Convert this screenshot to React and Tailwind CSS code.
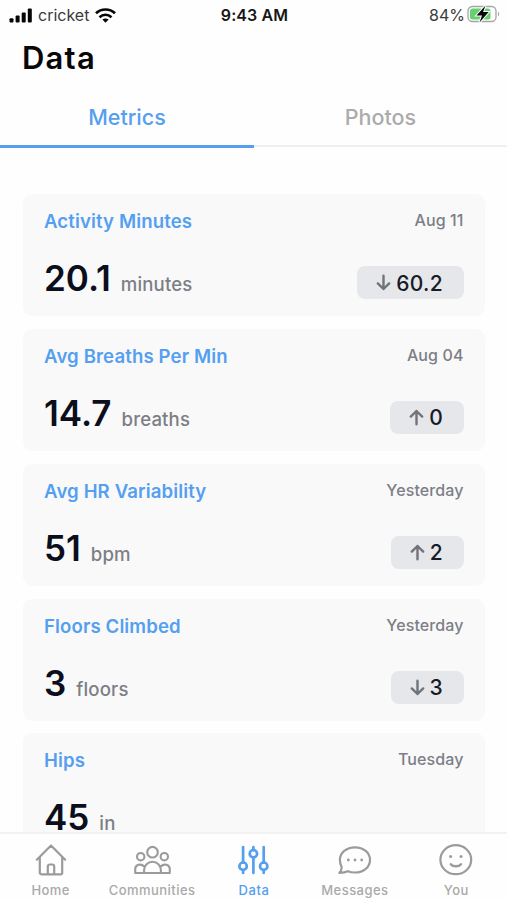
import React from "react";

const metrics = [
  { name: "Activity Minutes", date: "Aug 11", value: "20.1", unit: "minutes", dir: "down", delta: "60.2" },
  { name: "Avg Breaths Per Min", date: "Aug 04", value: "14.7", unit: "breaths", dir: "up", delta: "0" },
  { name: "Avg HR Variability", date: "Yesterday", value: "51", unit: "bpm", dir: "up", delta: "2" },
  { name: "Floors Climbed", date: "Yesterday", value: "3", unit: "floors", dir: "down", delta: "3" },
  { name: "Hips", date: "Tuesday", value: "45", unit: "in" },
];

function Arrow({ dir }) {
  return (
    <svg
      className={dir === "up" ? "h-[17px] w-[15px] text-[#707378]" : "h-[17px] w-[15px] rotate-180 text-[#707378]"}
      viewBox="0 0 15 17"
      fill="none"
      stroke="currentColor"
      strokeWidth="2.4"
      strokeLinecap="round"
      strokeLinejoin="round"
    >
      <path d="M7.500 15.300V2M1.800 7.600 7.500 2l5.700 5.600" />
    </svg>
  );
}

function MetricCard({ metric }) {
  return (
    <section className="flex h-[122px] shrink-0 flex-col justify-between rounded-[9px] bg-[#f9f9fa] pt-[14px] pr-[21px] pb-[17px] pl-[21.500px]">
      <div className="flex items-start justify-between">
        <h2 className="text-[18.600px] leading-[27px] font-semibold tracking-[0.120px] text-[#559ff0]">{metric.name}</h2>
        <span className="text-[16px] leading-[24px] font-medium tracking-[0.100px] text-[#7c7f85]">{metric.date}</span>
      </div>
      <div className="flex items-end justify-between">
        <div className="flex h-[42px] items-baseline gap-[10px]">
          <span className="text-[35px] leading-[42px] font-semibold text-[#0b0f1c]">{metric.value}</span>
          <span className="text-[18.600px] leading-[27px] font-medium tracking-[0.150px] text-[#7c7f85]">{metric.unit}</span>
        </div>
        {metric.delta && (
          <div className="flex h-[33px] items-center gap-[5px] rounded-[8px] bg-[#e5e7ea] pr-[20.500px] pl-[19px] text-[21px] leading-[33px] font-medium tracking-[0.300px] text-[#171b26]">
            <Arrow dir={metric.dir} />
            <span className="pt-px">{metric.delta}</span>
          </div>
        )}
      </div>
    </section>
  );
}

function StatusBar() {
  return (
    <header className="grid h-[30px] shrink-0 grid-cols-3 items-center pr-[7px] pl-[9px] text-[16px] leading-5 text-[#3b3b3b]">
      <div className="flex items-center">
        <svg className="mr-[6px] h-[15px] w-[23px]" viewBox="0 0 23 15" fill="#060606">
          <rect x="0.5" y="10.2" width="4" height="4.3" rx="1" />
          <rect x="6.6" y="7.5" width="4" height="7" rx="1" />
          <rect x="12.7" y="4.4" width="4" height="10.1" rx="1" />
          <rect x="18.8" y="0.5" width="4" height="14" rx="1" />
        </svg>
        <span>cricket</span>
        <svg className="ml-[6px] h-[15px] w-[21px]" viewBox="0 0 21 15" fill="none" stroke="#060606">
          <path d="M1 5.300C6.400.2 14.600.2 20 5.300" strokeWidth="2.700" />
          <path d="M4.500 9.200C8 5.900 13 5.900 16.500 9.200" strokeWidth="2.600" />
          <path d="M7.400 11.600C9.300 10 11.700 10 13.600 11.600L10.500 14.700Z" fill="#060606" stroke="none" />
        </svg>
      </div>
      <span className="text-center font-semibold tracking-[0.100px] text-[#171717]">9:43 AM</span>
      <div className="flex items-center justify-end gap-[2px]">
        <span>84%</span>
        <svg className="h-[20px] w-[33px]" viewBox="0 0 33 20">
          <rect x="1" y="1.500" width="28" height="15" rx="4.500" fill="#fff" stroke="#a5a5a5" strokeWidth="1.300" />
          <rect x="3" y="3.500" width="20.500" height="11" rx="2.500" fill="#65d06d" />
          <path d="M31 6.700c1.500.600 1.500 4 0 4.600Z" fill="#a5a5a5" />
          <path d="m18.500.500-9 10h5.500L12.500 17.500l9.200-10.500h-5.600Z" fill="#080808" stroke="#fff" strokeWidth="2" paintOrder="stroke" />
        </svg>
      </div>
    </header>
  );
}

function HomeIcon() {
  return (
    <svg className="h-9 w-9" viewBox="0 0 36 36" fill="none" stroke="currentColor" strokeWidth="2.200" strokeLinecap="round" strokeLinejoin="round">
      <path d="M3.800 18.700 18 4.500 32.200 18.700M6.800 16V31.700a1.600 1.600 0 0 0 1.600 1.600h19.200a1.600 1.600 0 0 0 1.600-1.600V16M14.800 33.200v-7.700a2 2 0 0 1 2-2h2.400a2 2 0 0 1 2 2v7.700" />
    </svg>
  );
}

function CommunitiesIcon() {
  return (
    <svg className="h-9 w-[38px]" viewBox="0 0 38 36" fill="none" stroke="currentColor" strokeWidth="2.100" strokeLinecap="round" strokeLinejoin="round">
      <circle cx="19.500" cy="11.200" r="5.300" />
      <circle cx="7.700" cy="15.700" r="3.700" />
      <circle cx="31.300" cy="15.700" r="3.700" />
      <path d="M11.100 32v-3.200a8.400 8 0 0 1 16.800 0v3.200ZM11.100 32H2.200v-3.900c0-4.500 5.700-6 9-2.700M27.900 32h8.900v-3.900c0-4.500-5.700-6-9-2.700" />
    </svg>
  );
}

function DataIcon() {
  return (
    <svg className="h-9 w-9" viewBox="0 0 36 36" fill="none" stroke="currentColor" strokeWidth="2.700" strokeLinecap="round">
      <path d="M8.100 6v15.700M8.100 29.500v2.500M18.400 6v3.200M18.400 17v15M28.700 6v15.700M28.700 29.500v2.500" />
      <circle cx="8.100" cy="25.200" r="3.700" />
      <circle cx="18.400" cy="12.700" r="3.700" />
      <circle cx="28.700" cy="25.200" r="3.700" />
    </svg>
  );
}

function MessagesIcon() {
  return (
    <svg className="h-9 w-9" viewBox="0 0 36 36" fill="none" stroke="currentColor" strokeWidth="2.200" strokeLinejoin="round">
      <path d="M18 6.300C26.600 6.300 33 11.800 33 18.900s-6.400 12.600-15 12.600c-2.700 0-5.200-.400-7.200-1.300-2.300 1.200-4.900 1.600-8.400 1.700 1.500-1.700 2.300-3.600 2.300-5.600-1-2.200-1.800-4.500-1.800-7.400C2.900 11.800 9.400 6.300 18 6.300Z" />
      <g fill="currentColor" stroke="none">
        <circle cx="11.300" cy="19" r="1.400" />
        <circle cx="18" cy="19" r="1.400" />
        <circle cx="24.700" cy="19" r="1.400" />
      </g>
    </svg>
  );
}

function YouIcon() {
  return (
    <svg className="h-9 w-9" viewBox="0 0 36 36" fill="none" stroke="currentColor" strokeWidth="2.200" strokeLinecap="round">
      <ellipse cx="17.800" cy="18.700" rx="15.400" ry="14.500" />
      <path d="M12.800 23.200c2 2.700 8.200 2.700 10.200 0" strokeWidth="2.400" />
      <circle cx="12.600" cy="15.500" r="1.500" fill="currentColor" stroke="none" />
      <circle cx="23" cy="15.500" r="1.500" fill="currentColor" stroke="none" />
    </svg>
  );
}

const navItems = [
  { label: "Home", Icon: HomeIcon },
  { label: "Communities", Icon: CommunitiesIcon },
  { label: "Data", Icon: DataIcon, active: true },
  { label: "Messages", Icon: MessagesIcon },
  { label: "You", Icon: YouIcon },
];

export default function App() {
  return (
    <div className="flex h-[900px] w-[507px] flex-col overflow-hidden bg-[#fefefe] font-['Inter','Liberation_Sans',sans-serif]">
      <StatusBar />
      <h1 className="h-[62px] shrink-0 pl-[22px] text-[31px] leading-[56px] font-semibold tracking-[1.200px] text-[#080808]">Data</h1>
      <nav className="flex h-[56px] shrink-0 items-start text-center text-[21.500px] leading-[50px] font-medium">
        <div className="h-[56px] w-[254px] border-b-[3px] border-[#559ff0] text-[#559ff0]">Metrics</div>
        <div className="h-[55px] flex-1 border-b-2 border-[#efeff0] text-[#ababab]">Photos</div>
      </nav>
      <main className="flex min-h-0 flex-1 flex-col gap-[12.850px] overflow-hidden px-[22.500px] pt-[46px]">
        {metrics.map((m) => (
          <MetricCard key={m.name} metric={m} />
        ))}
      </main>
      <footer className="grid h-[68px] shrink-0 grid-cols-5 border-t-2 border-[#f2f2f3] bg-[#fefefe] pt-[7px]">
        {navItems.map(({ label, Icon, active }) => (
          <div key={label} className={active ? "flex flex-col items-center text-[#559ff0]" : "flex flex-col items-center text-[#9b9b9b]"}>
            <Icon />
            <span className={active ? "pl-px text-[13px] leading-[26px] font-medium tracking-[0.600px]" : "text-[13px] leading-[26px] font-medium tracking-[0.450px] text-[#a9a9a9]"}>{label}</span>
          </div>
        ))}
      </footer>
    </div>
  );
}
